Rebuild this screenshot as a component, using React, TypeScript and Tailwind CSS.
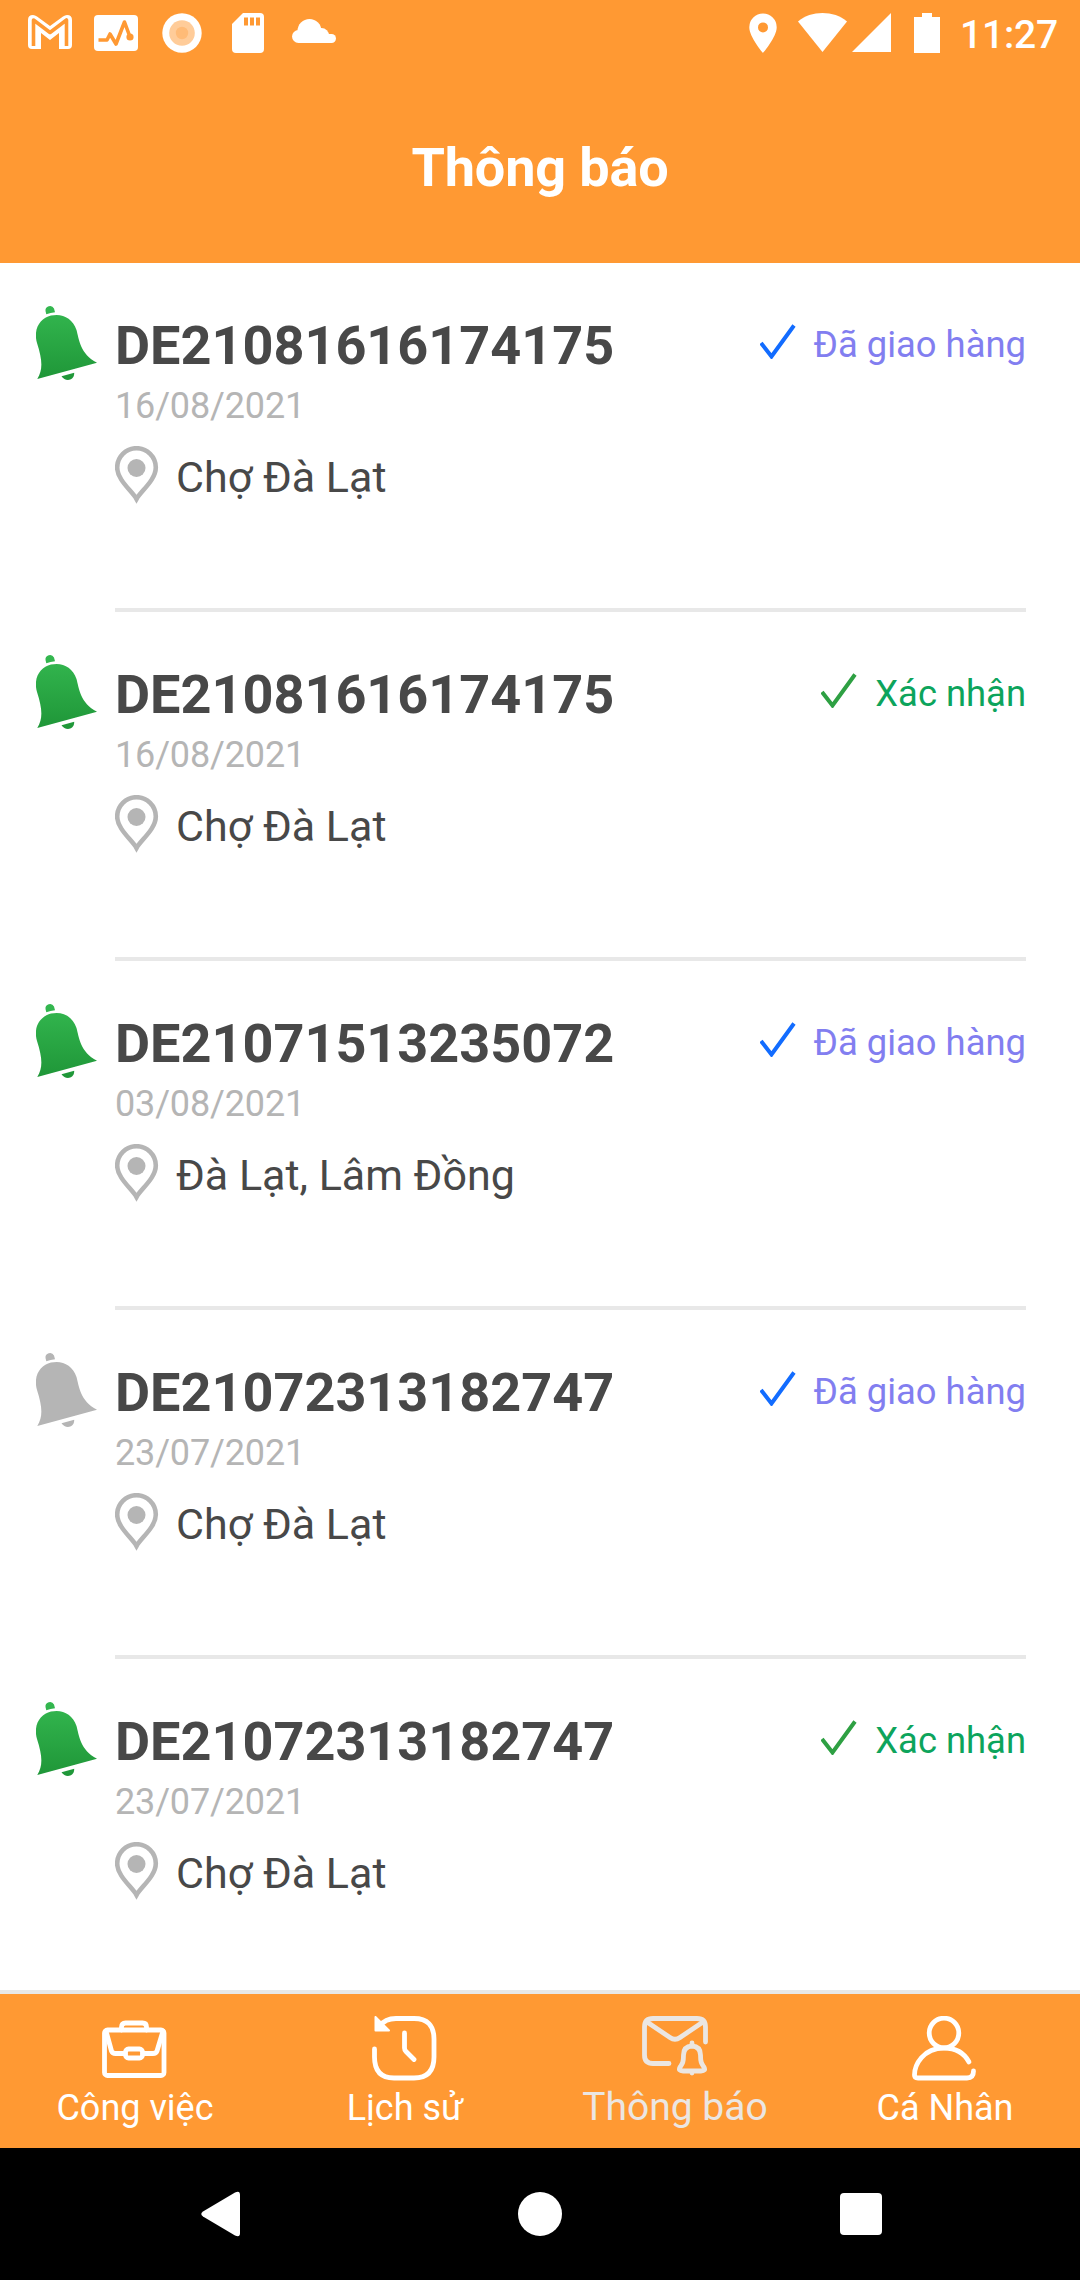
const notifications = [
  { code: "DE21081616174175", date: "16/08/2021", address: "Chợ Đà Lạt", delivered: true, unread: true },
  { code: "DE21081616174175", date: "16/08/2021", address: "Chợ Đà Lạt", delivered: false, unread: true },
  { code: "DE21071513235072", date: "03/08/2021", address: "Đà Lạt, Lâm Đồng", delivered: true, unread: true },
  { code: "DE21072313182747", date: "23/07/2021", address: "Chợ Đà Lạt", delivered: true, unread: false },
  { code: "DE21072313182747", date: "23/07/2021", address: "Chợ Đà Lạt", delivered: false, unread: true },
];

function StatusBar() {
  return (
    <div className="flex h-[66px] items-start justify-between pl-7 pr-[22px] pt-[13px] text-white">
      <div className="flex items-start">
        <svg className="mt-[2px] h-[35px] w-11" viewBox="0 0 44 35" fill="none">
          <path d="M0 5Q0 0 5 0Q7 0 9 1.5L22 11L35 1.5Q37 0 39 0Q44 0 44 5V30Q44 34 40 34H31V18L22 25L13 18V34H4Q0 34 0 30Z" fill="currentColor" />
          <path d="M5.5 31V5L22 17.5L38.5 5V31" stroke="#ff9933" strokeWidth="3.6" strokeLinejoin="round" />
        </svg>
        <svg className="ml-[22px] mt-[2px] h-9 w-11" viewBox="0 0 44 36" fill="none">
          <rect width="44" height="36" rx="4" fill="currentColor" />
          <path d="M4.5 25H13L16 19L22 29L30.5 7L36 22" stroke="#ff9933" strokeWidth="3.6" strokeLinejoin="round" />
          <circle cx="36" cy="22" r="3.6" fill="#ff9933" />
        </svg>
        <svg className="ml-6 h-10 w-10" viewBox="0 0 40 40">
          <circle cx="20" cy="20" r="19.7" fill="currentColor" />
          <circle cx="20" cy="20" r="12.8" fill="#ffcc99" />
          <circle cx="20" cy="20" r="6.2" fill="#ffbb77" />
        </svg>
        <svg className="ml-[30px] h-10 w-8" viewBox="0 0 32 40">
          <path d="M11 0H28Q32 0 32 4V36Q32 40 28 40H4Q0 40 0 36V11Z" fill="currentColor" />
          <path d="M12 4.5h4v8h-4zM18 4.5h4v8h-4zM24 4.5h4v8h-4z" fill="#ff9933" />
        </svg>
        <svg className="ml-7 mt-[6px] h-6 w-11" viewBox="0 0 44 24" fill="currentColor">
          <circle cx="6.5" cy="17.500" r="6.500" />
          <circle cx="17.500" cy="12" r="12" />
          <circle cx="29.500" cy="16.500" r="7.500" />
          <circle cx="39.500" cy="19.500" r="4.500" />
          <rect x="6.500" y="15" width="33" height="9" />
        </svg>
      </div>
      <div className="flex items-start">
        <svg className="h-10 w-7" viewBox="0 0 28 40">
          <path fillRule="evenodd" d="M14 .5A13.7 13.7 0 0 0 .3 14.2C.3 24 14 40 14 40S27.700 24 27.700 14.200A13.700 13.700 0 0 0 14 .5ZM14 9.400A5 5 0 1 1 14 19.400A5 5 0 0 1 14 9.400Z" fill="currentColor" />
        </svg>
        <svg className="ml-[21px] h-[39px] w-[49px]" viewBox="0 0 49 39">
          <path d="M24.500 39L0 8.500C13-2.800 36-2.800 49 8.500Z" fill="currentColor" />
        </svg>
        <svg className="ml-[5px] h-[39px] w-[39px]" viewBox="0 0 39 39">
          <path d="M39 0V39H0Z" fill="currentColor" />
        </svg>
        <svg className="ml-[23px] h-10 w-[26px]" viewBox="0 0 26 40">
          <path d="M8 0H18V4H26V40H0V4H8Z" fill="currentColor" />
        </svg>
        <span className="ml-5 mt-[-1px] text-[39px] font-medium leading-[46px] tracking-[-0.2px]">11:27</span>
      </div>
    </div>
  );
}

function Bell({ unread }: { unread: boolean }) {
  const fill = unread ? "url(#bellGreen)" : "#b5b5b5";
  return (
    <svg className="h-[75px] w-[62px]" viewBox="0 0 62 75">
      <defs>
        <linearGradient id="bellGreen" x1="0" y1="0" x2="0" y2="75" gradientUnits="userSpaceOnUse">
          <stop offset="0" stopColor="#34b850" />
          <stop offset="1" stopColor="#1f9638" />
        </linearGradient>
      </defs>
      <path d="M10.300 9.200L9.500 6A4.500 4.500 0 0 1 18 3.500L19 7.200Q14.500 7.500 10.300 9.200Z" fill={fill} />
      <path d="M1 38C-3 24 4 13.500 15 10.600C26 8 36.500 13 40.500 25C43 34 44 49 61 57.800L1.300 74C7 65 6.500 55 1 38Z" fill={fill} />
      <path d="M25.500 71.200L38.200 67.800C38.500 76 29 77 25.500 71.200Z" fill={fill} />
    </svg>
  );
}

function DeliveryStatus({ delivered }: { delivered: boolean }) {
  return (
    <div className={`flex items-start text-[36.400px] leading-[42px] ${delivered ? "text-[#827ef0]" : "text-[#0da45c]"}`}>
      <svg className="mr-[18px] h-[35px] w-[36px]" viewBox="0 0 36 35" fill="none">
        <path d="M1 19L11.500 32.500L34 1.500" stroke={delivered ? "#126cff" : "#2ea043"} strokeWidth="4" />
      </svg>
      {delivered ? "Đã giao hàng" : "Xác nhận"}
    </div>
  );
}

function NotificationRow({ item }: { item: (typeof notifications)[number] }) {
  return (
    <li className="flex h-[349px] shrink-0 pl-9 pr-[54px]">
      <div className="w-[79px] shrink-0 pt-[42px]">
        <Bell unread={item.unread} />
      </div>
      <div className="flex-1 border-b-4 border-[#e8e8e8] pt-[51px]">
        <div className="flex items-start justify-between">
          <h2 className="text-[54px] font-bold leading-[64px] text-[#484848]">{item.code}</h2>
          <div className="pt-[10px]">
            <DeliveryStatus delivered={item.delivered} />
          </div>
        </div>
        <p className="mt-[7px] text-[36px] leading-[42px] tracking-[-0.15px] text-[#b5b5b5]">{item.date}</p>
        <div className="mt-[19px] flex items-start">
          <svg className="h-[58px] w-[44px]" viewBox="0 0 44 58" fill="none">
            <path d="M21.500 53C17 45 2.200 34 2.200 21.500A19.300 19.300 0 0 1 40.800 21.500C40.800 34 26 45 21.500 53Z" stroke="#b5b5b5" strokeWidth="4.600" />
            <circle cx="21.500" cy="22" r="9" fill="#b5b5b5" />
          </svg>
          <span className="ml-[17px] mt-[5px] text-[43px] leading-[52px] text-[#484848]">{item.address}</span>
        </div>
      </div>
    </li>
  );
}

function BriefcaseIcon() {
  return (
    <>
      <path d="M19.500 14V11Q19.500 7 23.500 7H40.500Q44.500 7 44.500 11V14" />
      <rect x="2.500" y="14" width="59.500" height="45.500" rx="3" />
      <path d="M4 15L9.500 35Q10.500 37.500 13.500 37.500H23M41 37.500H51Q54 37.500 55 35L61 15" />
      <rect x="23.500" y="33" width="17" height="9" rx="3" />
    </>
  );
}

function HistoryIcon() {
  return (
    <>
      <path d="M2.500 33V41Q2.500 62 22 62H42Q62 62 62 41V23Q62 2.500 42 2.500H24Q13 2.500 8 10" />
      <path d="M3.500 1V14.500H17Z" fill="currentColor" strokeWidth="2" />
      <path d="M32.500 17V32Q32.500 34 34 35.500L42 43.500" />
    </>
  );
}

function MailBellIcon() {
  return (
    <>
      <path d="M27 47.500H11Q2.500 47.500 2.500 39V11Q2.500 2.500 11 2.500H55Q63.500 2.500 63.500 11V26" />
      <path d="M5 6L28 21.500Q33 25 38 21.500L61 6" />
      <path d="M50 30C43 30.500 41.500 35 41.500 39C41.500 46 40.500 47.500 38.500 50.500C36 54 38 55 41 55H59C62 55 64 54 61.500 50.500C59.500 47.500 58.500 46 58.500 39C58.500 35 57 30.500 50 30ZM50 27V29M50 55V57" />
    </>
  );
}

function PersonIcon() {
  return (
    <>
      <circle cx="32" cy="17" r="14.800" />
      <path d="M57 46C50 33 38 32 32 32C11 32 2.500 49 2.500 59Q2.500 62 6 62H55Q61.500 62 61.500 55" />
    </>
  );
}

const tabs = [
  { label: "Công việc", Icon: BriefcaseIcon, active: false },
  { label: "Lịch sử", Icon: HistoryIcon, active: false },
  { label: "Thông báo", Icon: MailBellIcon, active: true },
  { label: "Cá Nhân", Icon: PersonIcon, active: false },
];

export default function App() {
  return (
    <div className="flex h-[2280px] w-[1080px] flex-col overflow-hidden bg-white font-['Roboto',sans-serif]">
      <header className="h-[263px] shrink-0 bg-[#ff9933]">
        <StatusBar />
        <h1 className="mt-[70px] text-center text-[54px] font-bold leading-[64px] tracking-[-0.15px] text-white">Thông báo</h1>
      </header>

      <ul className="flex min-h-0 flex-1 flex-col overflow-hidden">
        {notifications.map((item, idx) => (
          <NotificationRow key={idx} item={item} />
        ))}
      </ul>

      <nav className="grid h-[158px] shrink-0 grid-cols-4 border-t-4 border-[#e8e8e8] bg-[#ff9933]">
        {tabs.map(({ label, Icon, active }) => (
          <button key={label} className={`flex flex-col items-center pt-[22px] ${active ? "text-[#ebe6e2]" : "text-white"}`}>
            <svg className="h-[66px] w-[66px] shrink-0" viewBox="0 0 66 66" fill="none" stroke="currentColor" strokeWidth="4.800" strokeLinecap="round" strokeLinejoin="round">
              <Icon />
            </svg>
            <span className={`flex h-[46px] items-center whitespace-nowrap ${active ? "mt-[2px] text-[39px]" : "mt-[3px] text-[36px]"}`}>{label}</span>
          </button>
        ))}
      </nav>

      <footer className="flex h-[132px] shrink-0 items-center justify-between bg-black pl-[201px] pr-[198px] text-white">
        <svg className="h-[46px] w-[39px]" viewBox="0 0 39 46">
          <path d="M2 20.500L34 1.500Q39-1 39 4V42Q39 47 34 44.500L2 25.500Q-1.500 23 2 20.500Z" fill="currentColor" />
        </svg>
        <div className="size-[44px] rounded-full bg-white" />
        <div className="size-[42px] rounded-[4px] bg-white" />
      </footer>
    </div>
  );
}
